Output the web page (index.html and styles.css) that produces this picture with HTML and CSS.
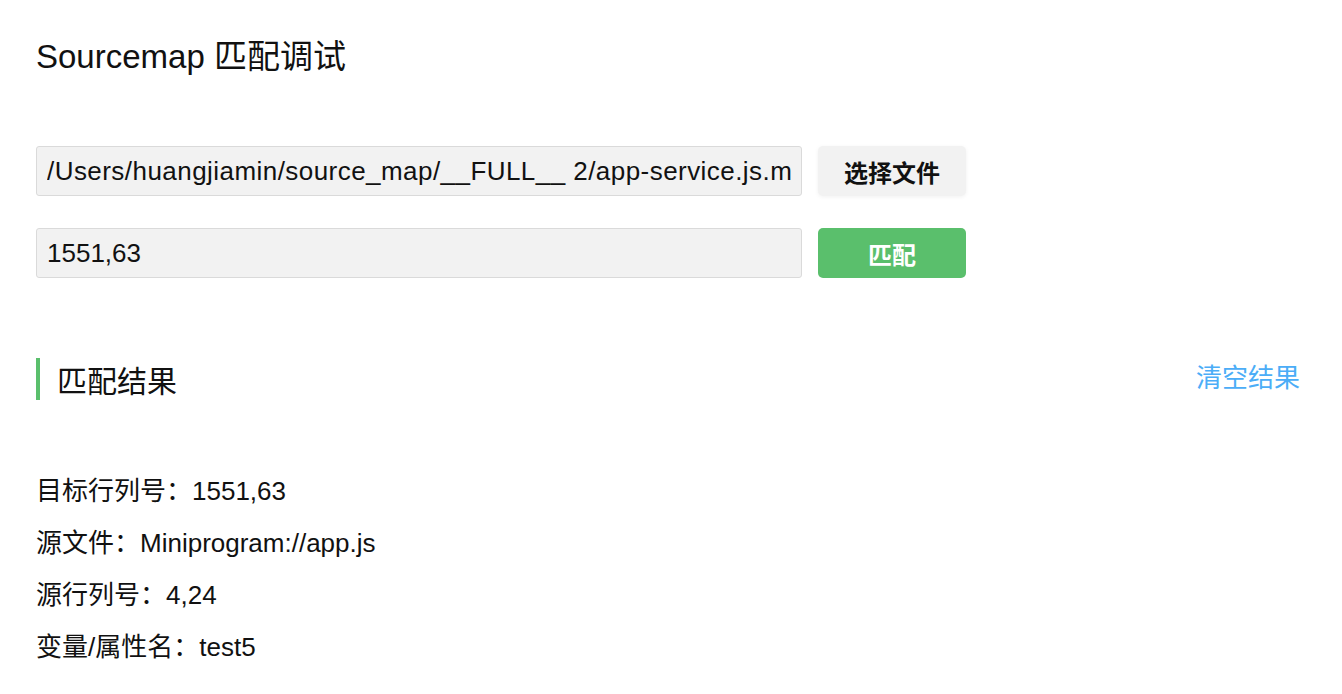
FILE: index.html
```html
<!DOCTYPE html>
<html lang="zh-CN">
<head>
<meta charset="utf-8">
<title>Sourcemap 匹配调试</title>
<link rel="stylesheet" href="styles.css">
</head>
<body>
<div class="page">
  <h1 class="title">Sourcemap 匹配调试</h1>
  <div class="form">
    <div class="row">
      <input class="field field-path" type="text" value="/Users/huangjiamin/source_map/__FULL__ 2/app-service.js.map" readonly>
      <button class="btn btn-default" type="button">选择文件</button>
    </div>
    <div class="row">
      <input class="field" type="text" value="1551,63">
      <button class="btn btn-primary" type="button">匹配</button>
    </div>
  </div>
  <div class="section-head">
    <h2 class="section-title">匹配结果</h2>
    <a class="clear-link" href="#">清空结果</a>
  </div>
  <div class="results">
    <div class="result-line">目标行列号：1551,63</div>
    <div class="result-line">源文件：Miniprogram://app.js</div>
    <div class="result-line">源行列号：4,24</div>
    <div class="result-line">变量/属性名：test5</div>
  </div>
</div>
</body>
</html>
```
FILE: styles.css
```css
* { box-sizing: border-box; }
html, body { margin: 0; padding: 0; background: #fff; }
body {
  font-family: "Liberation Sans", Arial, "Noto Sans CJK SC", sans-serif;
  color: #111;
}
.page {
  padding: 36px 42px 20px 36px;
}
.title {
  margin: 0;
  font-size: 33px;
  line-height: 42px;
  font-weight: normal;
  color: #111;
}
.form {
  margin-top: 68px;
  display: flex;
  flex-direction: column;
  gap: 32px;
}
.row {
  display: flex;
  gap: 16px;
  align-items: center;
}
.field {
  width: 766px;
  height: 50px;
  padding: 0 10px;
  font-family: "Liberation Sans", Arial, "Noto Sans CJK SC", sans-serif;
  font-size: 26px;
  color: #111;
  background: #f2f2f2;
  border: 1px solid #dadada;
  border-radius: 3px;
  outline: none;
}
.field-path { letter-spacing: 0.45px; }
.btn {
  width: 148px;
  height: 50px;
  border: none;
  border-radius: 5px;
  font-family: "Noto Sans CJK SC", sans-serif;
  font-size: 24px;
  font-weight: bold;
  cursor: pointer;
}
.btn-default {
  background: #f2f2f2;
  color: #111;
  box-shadow: 0 1px 4px rgba(0,0,0,0.06);
}
.btn-primary {
  background: #5abf6c;
  color: #fff;
}
.section-head {
  margin-top: 80px;
  display: flex;
  justify-content: space-between;
  align-items: center;
}
.section-title {
  margin: 0;
  height: 42px;
  line-height: 42px;
  border-left: 4px solid #5abf6c;
  padding-left: 17px;
  font-family: "Noto Sans CJK SC", sans-serif;
  font-size: 30px;
  font-weight: normal;
  color: #111;
}
.clear-link {
  margin-bottom: 6px;
  font-family: "Noto Sans CJK SC", sans-serif;
  font-size: 26px;
  line-height: 36px;
  color: #4badf7;
  text-decoration: none;
}
.results {
  margin-top: 65px;
}
.result-line {
  font-size: 26px;
  line-height: 52px;
  color: #111;
}
```
